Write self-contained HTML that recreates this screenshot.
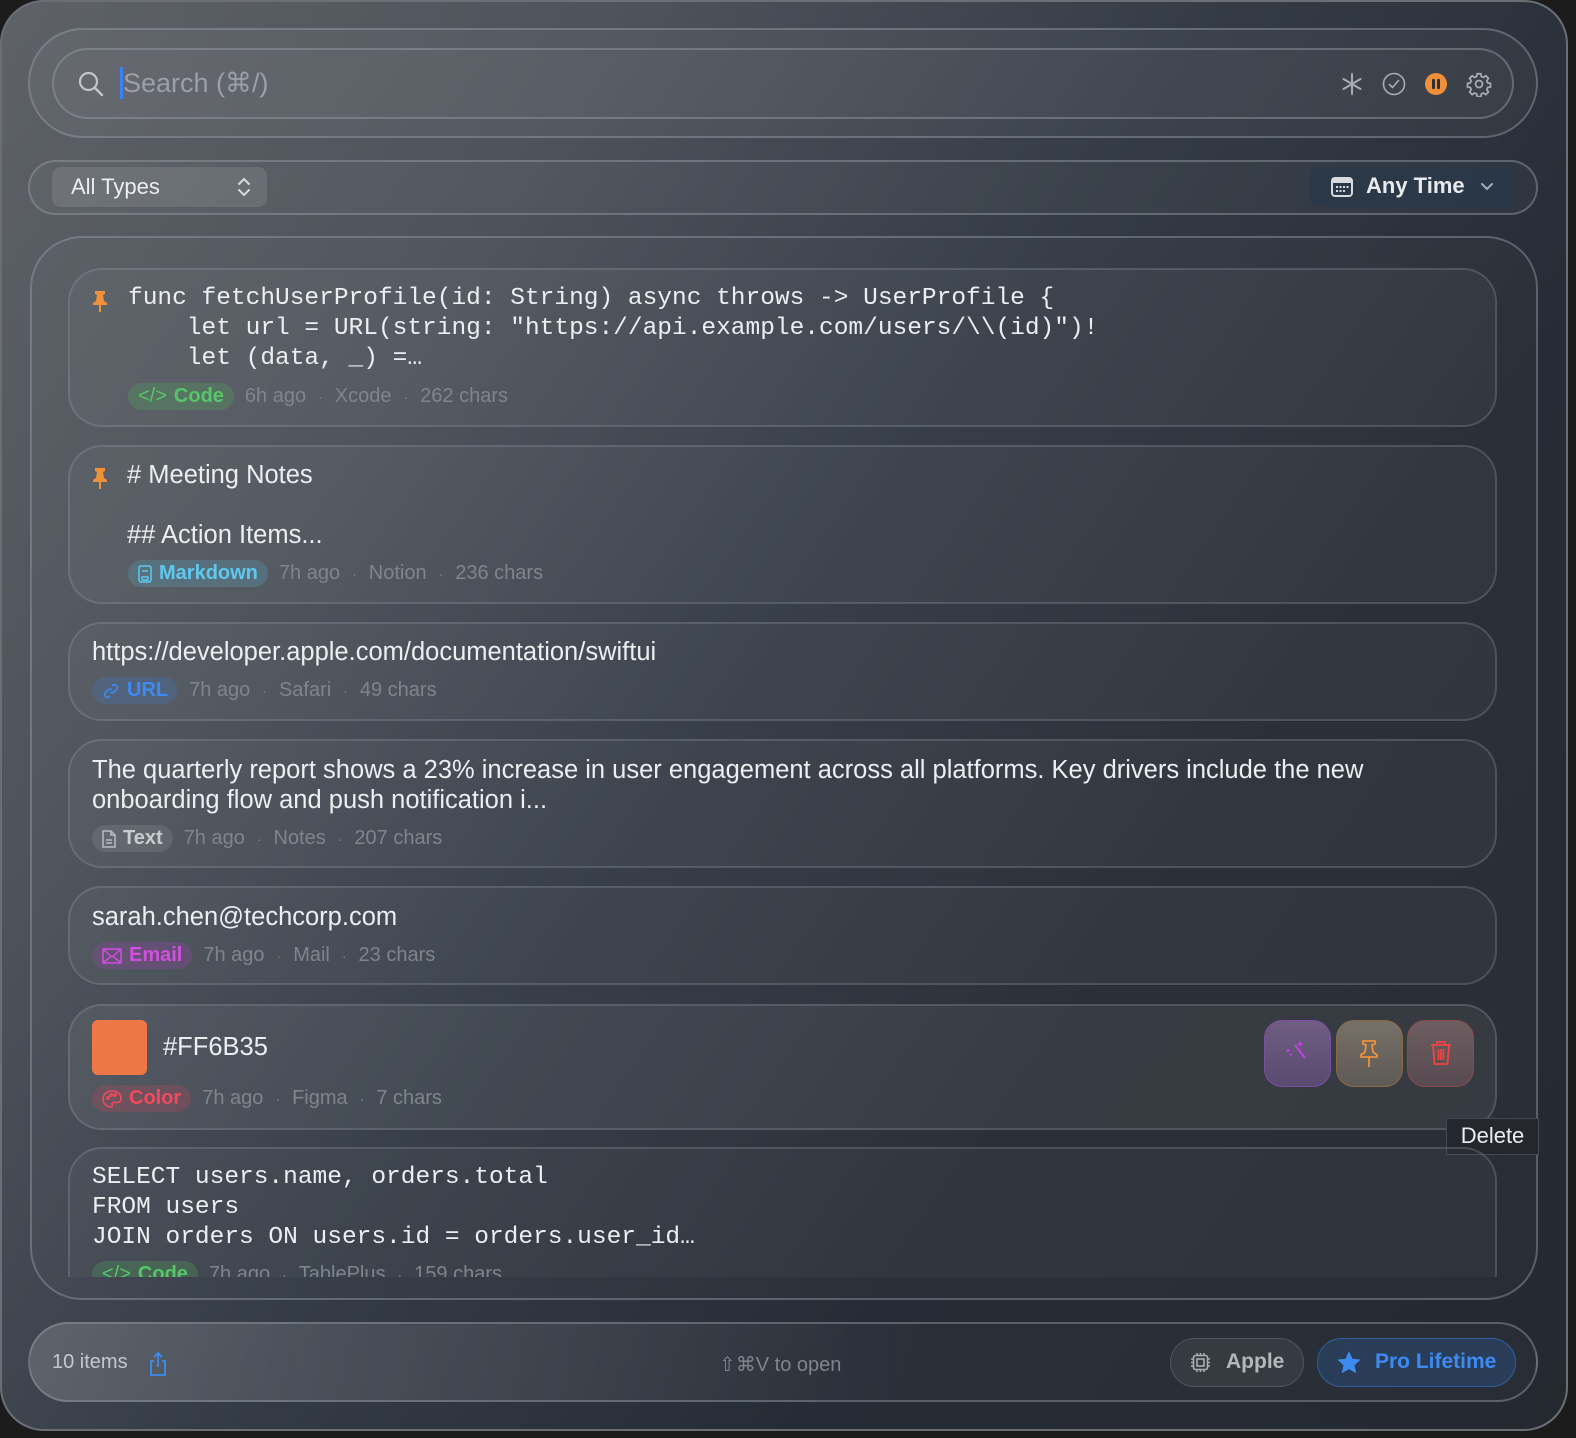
<!DOCTYPE html>
<html><head><meta charset="utf-8"><style>
*{box-sizing:border-box;margin:0;padding:0}
html,body{width:1576px;height:1438px;background:#1c1c1c;overflow:hidden;font-family:"Liberation Sans","DejaVu Sans",sans-serif;color:#e8e9ec}
.win{position:absolute;left:0;top:0;width:1568px;height:1431px;border-radius:44px;box-shadow:inset 0 0 0 2px #6b6f75;
background:linear-gradient(125deg,#5e6267 0%,#4d535b 25%,#343b45 48%,#262c35 70%,#252a31 100%);overflow:hidden}
.abs{position:absolute}
.pill{position:absolute;border:2px solid rgba(150,158,168,.45)}
.card{position:absolute;left:68px;width:1429px;border:2px solid rgba(150,158,168,.28);border-radius:34px;background:rgba(255,255,255,.035)}
.mono{font-family:"Liberation Mono","DejaVu Sans Mono",monospace;font-size:24.5px;line-height:30px;color:#eceef1;white-space:pre}
.txt{font-size:25.5px;color:#eceef1;white-space:nowrap}
.meta{position:absolute;font-size:20px;color:#7f858d;white-space:nowrap;display:flex;align-items:center}
.tag{display:inline-flex;align-items:center;height:27px;border-radius:14px;padding:0 10px;font-weight:bold;margin-right:11px;gap:7px}
.dot{margin:0 12px;font-size:14px}
.pin{position:absolute;left:25px;width:14px;height:22px}
</style></head><body>
<div class="win">
<!-- search -->
<div class="pill" style="left:28px;top:28px;width:1510px;height:110px;border-radius:55px;background:rgba(255,255,255,.04)"></div>
<div class="pill" style="left:52px;top:48px;width:1462px;height:71px;border-radius:36px;background:rgba(255,255,255,.03)"></div>
<svg class="abs" style="left:77px;top:70px" width="28" height="28" viewBox="0 0 28 28"><circle cx="11.5" cy="11.5" r="8.5" fill="none" stroke="#c3c7cc" stroke-width="2.2"/><path d="M18 18l7 7" stroke="#c3c7cc" stroke-width="2.4" stroke-linecap="round"/></svg>
<div class="abs" style="left:120px;top:67px;width:3px;height:32px;background:#3b82f6"></div>
<div class="abs" style="left:123px;top:68px;font-size:27px;color:#9aa0a8">Search (⌘/)</div>
<svg class="abs" style="left:1340px;top:72px" width="24" height="24" viewBox="0 0 24 24" stroke="#a8adb4" stroke-width="2" stroke-linecap="round"><path d="M12 2v20M3.5 7l17 10M3.5 17l17-10"/></svg>
<svg class="abs" style="left:1382px;top:72px" width="24" height="24" viewBox="0 0 24 24"><circle cx="12" cy="12" r="10.5" fill="none" stroke="#a8adb4" stroke-width="1.6"/><path d="M7.5 12.5l3 3 6-7" fill="none" stroke="#a8adb4" stroke-width="1.6" stroke-linecap="round"/></svg>
<svg class="abs" style="left:1424px;top:72px" width="24" height="24" viewBox="0 0 24 24"><circle cx="12" cy="12" r="11" fill="#f0913a"/><rect x="8" y="7" width="3" height="10" rx="1" fill="#2a2f36"/><rect x="13" y="7" width="3" height="10" rx="1" fill="#2a2f36"/></svg>
<svg class="abs" style="left:1466px;top:71px" width="26" height="26" viewBox="0 0 24 24" fill="none" stroke="#a8adb4" stroke-width="1.6"><circle cx="12" cy="12" r="3.2"/><path d="M10.3 2.5h3.4l.5 2.6 1.9.8 2.2-1.5 2.4 2.4-1.5 2.2.8 1.9 2.6.5v3.4l-2.6.5-.8 1.9 1.5 2.2-2.4 2.4-2.2-1.5-1.9.8-.5 2.6h-3.4l-.5-2.6-1.9-.8-2.2 1.5-2.4-2.4 1.5-2.2-.8-1.9-2.6-.5v-3.4l2.6-.5.8-1.9-1.5-2.2 2.4-2.4 2.2 1.5 1.9-.8z"/></svg>
<!-- filters -->
<div class="pill" style="left:28px;top:160px;width:1510px;height:55px;border-radius:28px;background:rgba(255,255,255,.03)"></div>
<div class="abs" style="left:52px;top:167px;width:215px;height:40px;border-radius:9px;background:rgba(255,255,255,.1)"></div>
<div class="abs" style="left:71px;top:174px;font-size:22px;color:#eceef1">All Types</div>
<svg class="abs" style="left:236px;top:176px" width="16" height="22" viewBox="0 0 16 22" fill="none" stroke="#d8dadd" stroke-width="2" stroke-linecap="round"><path d="M3 8l5-5 5 5M3 14l5 5 5-5"/></svg>
<div class="abs" style="left:1310px;top:167px;width:204px;height:40px;border-radius:9px;background:rgba(40,56,74,.75)"></div>
<svg class="abs" style="left:1331px;top:177px" width="22" height="20" viewBox="0 0 22 20"><rect x="1" y="1" width="20" height="18" rx="3" fill="none" stroke="#d8dadd" stroke-width="2"/><rect x="1" y="1" width="20" height="5" fill="#d8dadd"/><g fill="#d8dadd"><rect x="5" y="9" width="2" height="2"/><rect x="8.5" y="9" width="2" height="2"/><rect x="12" y="9" width="2" height="2"/><rect x="15.5" y="9" width="2" height="2"/><rect x="5" y="13" width="2" height="2"/><rect x="8.5" y="13" width="2" height="2"/><rect x="12" y="13" width="2" height="2"/></g></svg>
<div class="abs" style="left:1366px;top:173px;font-size:22px;font-weight:bold;color:#e8eaed">Any Time</div>
<svg class="abs" style="left:1479px;top:181px" width="16" height="12" viewBox="0 0 16 12" fill="none" stroke="#a8adb4" stroke-width="2" stroke-linecap="round"><path d="M3 3l5 5 5-5"/></svg>
<!-- list container -->
<div class="pill" style="left:30px;top:236px;width:1508px;height:1064px;border-radius:52px;background:rgba(255,255,255,.02)"></div>

<!-- card1 -->
<div class="card" style="top:268px;height:159px"></div>
<svg class="pin" style="left:93px;top:290px" viewBox="0 0 14 22"><path d="M2 1h10v3l-2 1 1 6 3 2v2H0v-2l3-2 1-6-2-1z" fill="#f0913a"/><path d="M7 15v7" stroke="#f0913a" stroke-width="2"/></svg>
<div class="abs mono" style="left:128px;top:284px">func fetchUserProfile(id: String) async throws -&gt; UserProfile {
    let url = URL(string: "https://api.example.com/users/\\(id)")!
    let (data, _) =…</div>
<div class="meta" style="left:128px;top:383px"><span class="tag" style="background:rgba(80,170,90,.28);color:#55c76a"><span style="font-weight:normal">&lt;/&gt;</span>Code</span>6h ago<span class="dot">·</span>Xcode<span class="dot">·</span>262 chars</div>

<!-- card2 -->
<div class="card" style="top:445px;height:159px"></div>
<svg class="pin" style="left:93px;top:467px" viewBox="0 0 14 22"><path d="M2 1h10v3l-2 1 1 6 3 2v2H0v-2l3-2 1-6-2-1z" fill="#f0913a"/><path d="M7 15v7" stroke="#f0913a" stroke-width="2"/></svg>
<div class="abs txt" style="left:127px;top:461px"># Meeting Notes</div>
<div class="abs txt" style="left:127px;top:521px">## Action Items...</div>
<div class="meta" style="left:128px;top:560px"><span class="tag" style="background:rgba(90,170,200,.25);color:#5fc8ee"><svg width="14" height="18" viewBox="0 0 14 18" fill="none" stroke="#5fc8ee" stroke-width="1.5"><rect x="1" y="1" width="12" height="16" rx="2"/><path d="M4 6h6M4 12h6v3H4z"/></svg>Markdown</span>7h ago<span class="dot">·</span>Notion<span class="dot">·</span>236 chars</div>

<!-- card3 -->
<div class="card" style="top:622px;height:99px"></div>
<div class="abs txt" style="left:92px;top:638px">https://developer.apple.com/documentation/swiftui</div>
<div class="meta" style="left:92px;top:677px"><span class="tag" style="background:rgba(70,120,190,.28);color:#3d8bf0"><svg width="18" height="18" viewBox="0 0 18 18" fill="none" stroke="#3d8bf0" stroke-width="1.6"><path d="M8 10a3 3 0 0 0 4 0l3-3a3 3 0 0 0-4-4l-1 1M10 8a3 3 0 0 0-4 0l-3 3a3 3 0 0 0 4 4l1-1"/></svg>URL</span>7h ago<span class="dot">·</span>Safari<span class="dot">·</span>49 chars</div>

<!-- card4 -->
<div class="card" style="top:739px;height:129px"></div>
<div class="abs txt" style="left:92px;top:755px;line-height:30px">The quarterly report shows a 23% increase in user engagement across all platforms. Key drivers include the new<br>onboarding flow and push notification i...</div>
<div class="meta" style="left:92px;top:825px"><span class="tag" style="background:rgba(255,255,255,.09);color:#c9ccd0"><svg width="14" height="18" viewBox="0 0 14 18" fill="none" stroke="#b8bcc2" stroke-width="1.5"><path d="M1 1h8l4 4v12H1z M9 1v4h4M4 10h6M4 13h6"/></svg>Text</span>7h ago<span class="dot">·</span>Notes<span class="dot">·</span>207 chars</div>

<!-- card5 -->
<div class="card" style="top:886px;height:99px"></div>
<div class="abs txt" style="left:92px;top:903px">sarah.chen@techcorp.com</div>
<div class="meta" style="left:92px;top:942px"><span class="tag" style="background:rgba(150,70,170,.3);color:#d24fe0"><svg width="20" height="16" viewBox="0 0 20 16" fill="none" stroke="#d24fe0" stroke-width="1.5"><rect x="1" y="1" width="18" height="14" rx="1"/><path d="M1 1l9 8 9-8M1 15l7-6M19 15l-7-6"/></svg>Email</span>7h ago<span class="dot">·</span>Mail<span class="dot">·</span>23 chars</div>

<!-- card6 -->
<div class="card" style="top:1004px;height:126px;background:rgba(255,255,255,.06)"></div>
<div class="abs" style="left:92px;top:1020px;width:55px;height:55px;border-radius:6px;background:#ee7845"></div>
<div class="abs txt" style="left:163px;top:1033px">#FF6B35</div>
<div class="meta" style="left:92px;top:1085px"><span class="tag" style="background:rgba(200,70,90,.25);color:#ef4b5e"><svg width="20" height="18" viewBox="0 0 20 18" fill="none" stroke="#ef4b5e" stroke-width="1.5"><path d="M10 1C5 1 1 4.5 1 9s4 8 8 8c1.5 0 1.5-1.5 1-2.5s0-2 1.5-2H15c2.5 0 4-1.5 4-4C19 4 15 1 10 1z"/><circle cx="6" cy="8" r="1.2"/><circle cx="9" cy="5" r="1.2"/><circle cx="13" cy="5" r="1.2"/></svg>Color</span>7h ago<span class="dot">·</span>Figma<span class="dot">·</span>7 chars</div>
<div class="abs" style="left:1264px;top:1020px;width:67px;height:67px;border-radius:18px;background:linear-gradient(#6f5e82,#5a4a70);border:1.5px solid #7b4ea6"></div>
<svg class="abs" style="left:1284px;top:1040px" width="26" height="26" viewBox="0 0 26 26" fill="#c640e6"><path d="M11 5l10 13" stroke="#c640e6" stroke-width="2"/><path d="M16 1l1 2 2 1-2 1-1 2-1-2-2-1 2-1z"/><path d="M4 8l.8 1.7 1.7.8-1.7.8L4 13l-.8-1.7-1.7-.8 1.7-.8z"/><path d="M7 13l.6 1.2 1.2.6-1.2.6L7 16.6l-.6-1.2-1.2-.6 1.2-.6z"/></svg>
<div class="abs" style="left:1336px;top:1020px;width:67px;height:67px;border-radius:18px;background:linear-gradient(#767168,#5e5a55);border:1.5px solid #8a6a45"></div>
<svg class="abs" style="left:1358px;top:1039px" width="22" height="30" viewBox="0 0 22 30" fill="none" stroke="#f0913a" stroke-width="1.8"><path d="M5 2h12v3l-3 1 1 7 4 3v2H3v-2l4-3 1-7-3-1z"/><path d="M11 18v10"/></svg>
<div class="abs" style="left:1407px;top:1020px;width:67px;height:67px;border-radius:18px;background:linear-gradient(#6e5e62,#574a50);border:1.5px solid #8a4a4e"></div>
<svg class="abs" style="left:1429px;top:1040px" width="24" height="26" viewBox="0 0 24 26" fill="none" stroke="#ef4444" stroke-width="1.8"><path d="M2 5h20M8 5V2h8v3M4 5l1.5 19h13L20 5M9.5 9v11M12 9v11M14.5 9v11"/></svg>
<!-- tooltip -->
<div class="abs" style="left:1446px;top:1118px;width:93px;height:37px;background:#24282e;border:1.5px solid #444a52;font-size:22px;color:#eceef1;text-align:center;line-height:34px">Delete</div>

<!-- card7 clipped -->
<div class="abs" style="left:68px;top:1147px;width:1429px;height:130px;overflow:hidden">
<div style="position:absolute;left:0;top:0;width:1429px;height:160px;border:2px solid rgba(150,158,168,.28);border-radius:34px;background:rgba(255,255,255,.03)"></div>
<div class="abs mono" style="left:24px;top:16px">SELECT users.name, orders.total
FROM users
JOIN orders ON users.id = orders.user_id…</div>
<div class="meta" style="left:24px;top:114px"><span class="tag" style="background:rgba(80,170,90,.28);color:#55c76a"><span style="font-weight:normal">&lt;/&gt;</span>Code</span>7h ago<span class="dot">·</span>TablePlus<span class="dot">·</span>159 chars</div>
</div>

<!-- footer -->
<div class="pill" style="left:28px;top:1322px;width:1510px;height:80px;border-radius:40px;background:linear-gradient(90deg,rgba(255,255,255,.16),rgba(255,255,255,.02) 60%)"></div>
<div class="abs" style="left:52px;top:1351px;font-size:20px;color:#c4c8cd">10 items</div>
<svg class="abs" style="left:148px;top:1351px" width="20" height="26" viewBox="0 0 20 26" fill="none" stroke="#3d8bf0" stroke-width="1.8"><path d="M10 16V2M6 6l4-4 4 4M6 10H3v14h14V10h-3"/></svg>
<div class="abs" style="left:719px;top:1352px;font-size:20px;color:#7f858d">⇧⌘V to open</div>
<div class="abs" style="left:1170px;top:1338px;width:134px;height:49px;border-radius:25px;border:1.5px solid #50565e;background:rgba(255,255,255,.06)"></div>
<svg class="abs" style="left:1190px;top:1352px" width="21" height="21" viewBox="0 0 21 21" fill="none" stroke="#a8adb4" stroke-width="1.6"><rect x="3.5" y="3.5" width="14" height="14" rx="2"/><rect x="7" y="7" width="7" height="7"/><path d="M7 1v2.5M10.5 1v2.5M14 1v2.5M7 17.5V20M10.5 17.5V20M14 17.5V20M1 7h2.5M1 10.5h2.5M1 14h2.5M17.5 7H20M17.5 10.5H20M17.5 14H20"/></svg>
<div class="abs" style="left:1226px;top:1350px;font-size:21px;font-weight:bold;color:#b4b8bd">Apple</div>
<div class="abs" style="left:1317px;top:1338px;width:199px;height:49px;border-radius:25px;border:1.5px solid #2f5f9e;background:rgba(44,80,130,.45)"></div>
<svg class="abs" style="left:1336px;top:1350px" width="26" height="25" viewBox="0 0 24 23"><path d="M12 1l3.2 7 7.6.8-5.7 5.1 1.6 7.5L12 17.6l-6.7 3.8 1.6-7.5L1.2 8.8l7.6-.8z" fill="#3d8bf0"/></svg>
<div class="abs" style="left:1375px;top:1350px;font-size:21px;font-weight:bold;color:#3d8bf0">Pro Lifetime</div>
</div>
</body></html>
